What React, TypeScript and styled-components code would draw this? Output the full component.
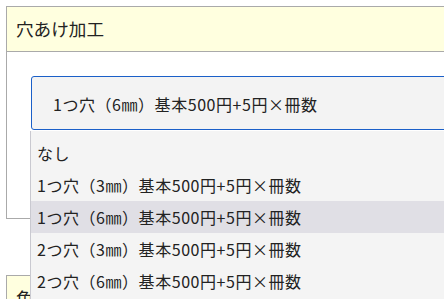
import styled, { createGlobalStyle } from "styled-components";

const options = [
  "なし",
  "1つ穴（3㎜）基本500円+5円×冊数",
  "1つ穴（6㎜）基本500円+5円×冊数",
  "2つ穴（3㎜）基本500円+5円×冊数",
  "2つ穴（6㎜）基本500円+5円×冊数",
];

export default function App() {
  const selected = 2;
  return (
    <>
      <GlobalStyle />
      <Page>
        <Panel>
          <PanelHeader>穴あけ加工</PanelHeader>
          <PanelBody>
            <SelectWrap>
              <SelectBox>{options[selected]}</SelectBox>
              <Menu>
                {options.map((o, i) => (
                  <MenuItem key={o} $active={i === selected}>
                    {o}
                  </MenuItem>
                ))}
              </Menu>
            </SelectWrap>
          </PanelBody>
        </Panel>
        <Panel>
          <PanelHeader>色</PanelHeader>
        </Panel>
      </Page>
    </>
  );
}

const GlobalStyle = createGlobalStyle`
  html, body {
    margin: 0;
    background: #fff;
    overflow: hidden;
  }
  body {
    font-family: "Noto Sans CJK JP", "Noto Sans", sans-serif;
    color: #222;
  }
`;

const Page = styled.div`
  width: 640px;
  padding: 6px;
  display: flex;
  flex-direction: column;
  gap: 56px;
`;

const Panel = styled.section`
  border: 1px solid #aaa;
  background: #fff;
`;

const PanelHeader = styled.h3`
  margin: 0;
  padding: 10px 9px 11px;
  background: #ffffdf;
  border-bottom: 1px solid #aaa;
  font-size: 17.6px;
  font-weight: 400;
  line-height: 23px;
`;

const PanelBody = styled.div`
  padding: 24px 0 88px 24px;
`;

const SelectWrap = styled.div`
  position: relative;
`;

const SelectBox = styled.div`
  box-sizing: border-box;
  height: 54px;
  padding: 15px 21px 0;
  border: 1px solid #1a5fc8;
  border-radius: 3px;
  background: #f3f3f3;
  font-size: 16px;
  line-height: 24px;
  letter-spacing: 0.55px;
`;

const Menu = styled.div`
  position: absolute;
  left: -1px;
  right: 0;
  top: 55px;
  padding-top: 6px;
  background: #f4f4f4;
  border-left: 1px solid #c9c9d0;
  height: 200px;
`;

const MenuItem = styled.div<{ $active?: boolean }>`
  height: 32px;
  padding-left: 6px;
  display: flex;
  align-items: center;
  font-size: 16px;
  letter-spacing: 0.55px;
  background: ${({ $active }) => ($active ? "#e0dfe5" : "transparent")};
`;
